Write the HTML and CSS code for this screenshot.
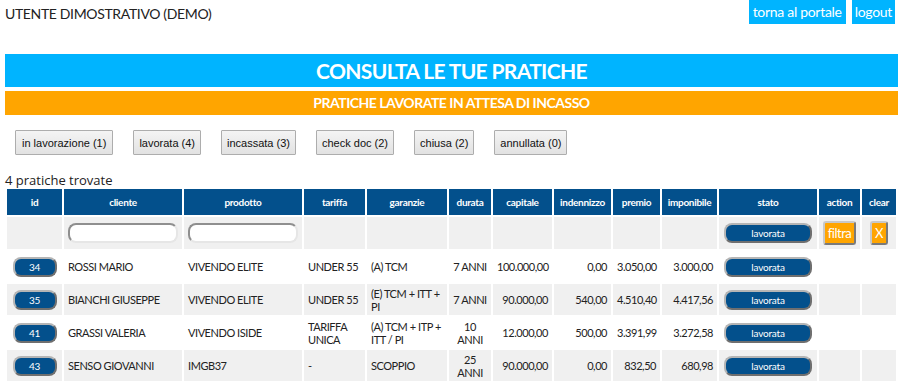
FILE: index.html
```html
<!DOCTYPE html>
<html lang="it">
<head>
    <meta charset="UTF-8">
    <meta name="viewport" content="width=device-width, initial-scale=1.0">
    <title>Consulta le tue pratiche</title>
    <link rel="stylesheet" href="styles.css">
</head>
<body>
    <div class="topbar">
        <span class="user">UTENTE DIMOSTRATIVO (DEMO)</span>
        <div class="toplinks">
            <a href="#" class="toplink">torna al portale</a>
            <a href="#" class="toplink">logout</a>
        </div>
    </div>

    <h1 class="title">CONSULTA LE TUE PRATICHE</h1>
    <h2 class="subtitle">PRATICHE LAVORATE IN ATTESA DI INCASSO</h2>

    <div class="filters">
        <button class="filter-btn">in lavorazione (1)</button>
        <button class="filter-btn">lavorata (4)</button>
        <button class="filter-btn">incassata (3)</button>
        <button class="filter-btn">check doc (2)</button>
        <button class="filter-btn">chiusa (2)</button>
        <button class="filter-btn">annullata (0)</button>
    </div>

    <p class="count">4 pratiche trovate</p>

    <table class="pratiche">
        <thead>
            <tr>
                <th class="c-id">id</th>
                <th class="c-cliente">cliente</th>
                <th class="c-prodotto">prodotto</th>
                <th class="c-tariffa">tariffa</th>
                <th class="c-garanzie">garanzie</th>
                <th class="c-durata">durata</th>
                <th class="c-capitale">capitale</th>
                <th class="c-indennizzo">indennizzo</th>
                <th class="c-premio">premio</th>
                <th class="c-imponibile">imponibile</th>
                <th class="c-stato">stato</th>
                <th class="c-action">action</th>
                <th class="c-clear">clear</th>
            </tr>
        </thead>
        <tbody>
            <tr class="filter-row">
                <td></td>
                <td class="center"><input type="text" class="search"></td>
                <td class="center"><input type="text" class="search"></td>
                <td></td>
                <td></td>
                <td></td>
                <td></td>
                <td></td>
                <td></td>
                <td></td>
                <td class="center"><button class="pill stato">lavorata</button></td>
                <td class="center"><button class="orange-btn">filtra</button></td>
                <td class="center"><button class="orange-btn">X</button></td>
            </tr>
            <tr>
                <td class="center"><button class="pill idbtn">34</button></td>
                <td>ROSSI MARIO</td>
                <td>VIVENDO ELITE</td>
                <td>UNDER 55</td>
                <td>(A) TCM</td>
                <td class="center">7 ANNI</td>
                <td class="num">100.000,00</td>
                <td class="num">0,00</td>
                <td class="num">3.050,00</td>
                <td class="num">3.000,00</td>
                <td class="center"><button class="pill stato">lavorata</button></td>
                <td></td>
                <td></td>
            </tr>
            <tr>
                <td class="center"><button class="pill idbtn">35</button></td>
                <td>BIANCHI GIUSEPPE</td>
                <td>VIVENDO ELITE</td>
                <td>UNDER 55</td>
                <td>(E) TCM + ITT + PI</td>
                <td class="center">7 ANNI</td>
                <td class="num">90.000,00</td>
                <td class="num">540,00</td>
                <td class="num">4.510,40</td>
                <td class="num">4.417,56</td>
                <td class="center"><button class="pill stato">lavorata</button></td>
                <td></td>
                <td></td>
            </tr>
            <tr>
                <td class="center"><button class="pill idbtn">41</button></td>
                <td>GRASSI VALERIA</td>
                <td>VIVENDO ISIDE</td>
                <td>TARIFFA UNICA</td>
                <td>(A) TCM + ITP + ITT / PI</td>
                <td class="center">10 ANNI</td>
                <td class="num">12.000,00</td>
                <td class="num">500,00</td>
                <td class="num">3.391,99</td>
                <td class="num">3.272,58</td>
                <td class="center"><button class="pill stato">lavorata</button></td>
                <td></td>
                <td></td>
            </tr>
            <tr>
                <td class="center"><button class="pill idbtn">43</button></td>
                <td>SENSO GIOVANNI</td>
                <td>IMGB37</td>
                <td>-</td>
                <td>SCOPPIO</td>
                <td class="center">25 ANNI</td>
                <td class="num">90.000,00</td>
                <td class="num">0,00</td>
                <td class="num">832,50</td>
                <td class="num">680,98</td>
                <td class="center"><button class="pill stato">lavorata</button></td>
                <td></td>
                <td></td>
            </tr>
        </tbody>
    </table>
</body>
</html>
```

FILE: styles.css
```css
body {
  font-family: Lato, 'Open Sans', sans-serif;
  color: #222;
  margin: 0;
  padding: 0 2px 0 5px;
  background: #fff;
}

.topbar {
  display: flex;
  justify-content: space-between;
  align-items: flex-start;
  height: 24px;
}

.user {
  font-size: 14px;
  letter-spacing: -0.35px;
  padding-top: 5px;
}

.toplinks {
  display: flex;
  gap: 6px;
  padding-right: 3px;
}

.toplink {
  display: block;
  background: #00b4ff;
  color: #fff;
  text-decoration: none;
  font-size: 14px;
  letter-spacing: -0.3px;
  line-height: 24px;
  padding: 0 4px;
}

.toplink:last-child {
  padding: 0 3px;
}

.title {
  margin: 30px 0 0;
  background: #00b4ff;
  color: #fff;
  text-align: center;
  font-size: 21px;
  font-weight: bold;
  letter-spacing: -0.65px;
  line-height: 33px;
}

.subtitle {
  margin: 4px 0 0;
  background: #ffa500;
  color: #fff;
  text-align: center;
  font-size: 14px;
  font-weight: bold;
  letter-spacing: -0.5px;
  line-height: 24px;
}

.filters {
  display: flex;
  gap: 20px;
  padding: 15px 0 0 10px;
}

.filter-btn {
  font-family: 'Liberation Sans', Arial, sans-serif;
  font-size: 11px;
  color: #111;
  height: 25px;
  padding: 0 5px;
  border: 1px solid #adadad;
  border-radius: 1px;
  background: linear-gradient(#f4f4f4, #e2e2e2);
}

.filter-btn:first-child {
  padding: 0 6px;
}

.count {
  margin: 18px 0 0;
  font-family: 'Open Sans', sans-serif;
  font-size: 13px;
  line-height: 15px;
}

.pratiche {
  width: 100%;
  table-layout: fixed;
  border-collapse: separate;
  border-spacing: 2px;
  margin-top: -1px;
  font-size: 11px;
  letter-spacing: -0.45px;
}

.pratiche th {
  background: #03508c;
  color: #fff;
  font-size: 10px;
  font-weight: bold;
  letter-spacing: -0.3px;
  height: 26px;
  padding: 0;
  box-sizing: border-box;
}

.c-id { width: 55px; }
.c-cliente { width: 118px; }
.c-prodotto { width: 118px; }
.c-tariffa { width: 61px; }
.c-garanzie { width: 80px; }
.c-durata { width: 42px; }
.c-capitale { width: 59px; }
.c-indennizzo { width: 57px; }
.c-premio { width: 47px; }
.c-imponibile { width: 55px; }
.c-stato { width: 98px; }
.c-action { width: 41px; }
.c-clear { width: 34px; }

.pratiche td {
  height: 31px;
  padding: 1px 4px;
  line-height: 13px;
  box-sizing: border-box;
  vertical-align: middle;
}

.pratiche tbody tr:nth-child(odd) td {
  background: #f0f0f0;
}

.pratiche .filter-row td {
  height: 32px;
  padding: 0;
}

.center { text-align: center; }
.num { text-align: right; }

.search {
  width: 110px;
  height: 20px;
  box-sizing: border-box;
  border: 2px solid #999;
  border-color: #8f8f8f #e6e6e6 #e6e6e6 #8f8f8f;
  border-radius: 8px;
  background: #fff;
  display: block;
  margin: 0 auto;
}

.pill {
  display: inline-block;
  background: #03508c;
  color: #fff;
  font-family: Lato, sans-serif;
  font-size: 10px;
  letter-spacing: -0.2px;
  height: 20px;
  padding: 0;
  border: 2px solid #9a9a9a;
  border-color: #b5b5b5 #6f6f6f #6f6f6f #b5b5b5;
  border-radius: 8px;
  vertical-align: middle;
}

.idbtn { width: 44px; }
.stato { width: 88px; }

.orange-btn {
  background: #ffa500;
  color: #fff;
  font-family: Lato, sans-serif;
  font-size: 13px;
  letter-spacing: -0.5px;
  height: 24px;
  padding: 0 3px;
  border: 2px solid #9a9a9a;
  border-color: #c8c8c8 #7a7a7a #7a7a7a #c8c8c8;
  border-radius: 3px;
  vertical-align: middle;
}
```
